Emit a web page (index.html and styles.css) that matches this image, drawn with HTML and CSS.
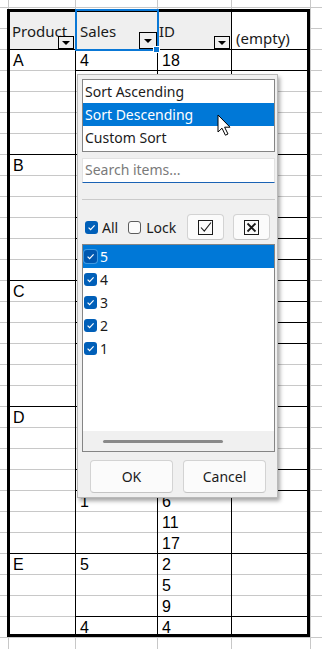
FILE: index.html
```html
<!DOCTYPE html>
<html>
<head>
<meta charset="utf-8">
<title>Pivot table filter</title>
<link rel="stylesheet" href="styles.css">
</head>
<body>
<div class="sheet">
  <div class="pivot">
    <div class="hd hd-prod"><span>Product</span><span class="dd"></span></div>
    <div class="hd hd-sales"><span>Sales</span><span class="dd dd-open"></span><span class="sel"><span class="sel-handle"></span></span></div>
    <div class="hd hd-id"><span>ID</span><span class="dd"></span></div>
    <div class="hd hd-empty"><span>(empty)</span></div>

    <div class="c prod s5">A</div>
    <div class="c sales s1">4</div><div class="c id s1">18</div><div class="c val s1"></div>
    <div class="c sales s4"></div><div class="c id s4"></div><div class="c val s4"></div>

    <div class="c prod s6">B</div>
    <div class="c sales s3"></div><div class="c id s3"></div><div class="c val s3"></div>
    <div class="c sales s1"></div><div class="c id s1"></div><div class="c val s1"></div>
    <div class="c sales s1"></div><div class="c id s1"></div><div class="c val s1"></div>
    <div class="c sales s1"></div><div class="c id s1"></div><div class="c val s1"></div>

    <div class="c prod s6">C</div>
    <div class="c sales s1"></div><div class="c id s1"></div><div class="c val s1"></div>
    <div class="c sales s1"></div><div class="c id s1"></div><div class="c val s1"></div>
    <div class="c sales s1"></div><div class="c id s1"></div><div class="c val s1"></div>
    <div class="c sales s3"></div><div class="c id s3"></div><div class="c val s3"></div>

    <div class="c prod s7">D</div>
    <div class="c sales s3"></div><div class="c id s3"></div><div class="c val s3"></div>
    <div class="c sales s1"></div><div class="c id s1"></div><div class="c val s1"></div>
    <div class="c sales s3">1</div><div class="c id s3"><span>6</span><span>11</span><span>17</span></div><div class="c val s3"></div>

    <div class="c prod s4 end">E</div>
    <div class="c sales s3">5</div><div class="c id s3"><span>2</span><span>5</span><span>9</span></div><div class="c val s3"></div>
    <div class="c sales s1 end">4</div><div class="c id s1 end">4</div><div class="c val s1 end"></div>
  </div>

  <div class="popup">
    <div class="sortlist">
      <div class="sortitem">Sort Ascending</div>
      <div class="sortitem hl">Sort Descending</div>
      <div class="sortitem">Custom Sort</div>
    </div>
    <div class="search">Search items...</div>
    <div class="sep"></div>
    <div class="controls">
      <span class="cb on"><svg viewBox="0 0 13 13" width="13" height="13"><path d="M3.6 6.6 L5.6 8.6 L9.6 4.4" fill="none" stroke="#fff" stroke-width="1.2"/></svg></span>
      <span class="ctl-label">All</span>
      <span class="cb off lock-cb"></span>
      <span class="ctl-label lock-label">Lock</span>
      <span class="ibtn ibtn-first"><svg viewBox="0 0 15 15" width="15" height="15"><rect x="0.5" y="0.5" width="14" height="14" fill="none" stroke="#1a1a1a"/><path d="M3 7.5 L6.3 11.2 L13 2.5" fill="none" stroke="#1a1a1a" stroke-width="1.1"/></svg></span>
      <span class="ibtn ibtn-last"><svg viewBox="0 0 15 15" width="15" height="15"><rect x="0.5" y="0.5" width="14" height="14" fill="none" stroke="#1a1a1a"/><path d="M3.5 3.5 L11.5 11.5 M11.5 3.5 L3.5 11.5" fill="none" stroke="#1a1a1a" stroke-width="1.8"/></svg></span>
    </div>
    <div class="vlist">
      <div class="vitems">
        <div class="vitem hl"><span class="cb on cb-hl"><svg viewBox="0 0 13 13" width="13" height="13"><path d="M3.6 6.6 L5.6 8.6 L9.6 4.4" fill="none" stroke="#fff" stroke-width="1.2"/></svg></span><span class="lbl">5</span></div>
        <div class="vitem"><span class="cb on"><svg viewBox="0 0 13 13" width="13" height="13"><path d="M3.6 6.6 L5.6 8.6 L9.6 4.4" fill="none" stroke="#fff" stroke-width="1.2"/></svg></span><span class="lbl">4</span></div>
        <div class="vitem"><span class="cb on"><svg viewBox="0 0 13 13" width="13" height="13"><path d="M3.6 6.6 L5.6 8.6 L9.6 4.4" fill="none" stroke="#fff" stroke-width="1.2"/></svg></span><span class="lbl">3</span></div>
        <div class="vitem"><span class="cb on"><svg viewBox="0 0 13 13" width="13" height="13"><path d="M3.6 6.6 L5.6 8.6 L9.6 4.4" fill="none" stroke="#fff" stroke-width="1.2"/></svg></span><span class="lbl">2</span></div>
        <div class="vitem"><span class="cb on"><svg viewBox="0 0 13 13" width="13" height="13"><path d="M3.6 6.6 L5.6 8.6 L9.6 4.4" fill="none" stroke="#fff" stroke-width="1.2"/></svg></span><span class="lbl">1</span></div>
      </div>
      <div class="hscroll"><div class="thumb"></div></div>
    </div>
    <div class="actions">
      <span class="btn">OK</span>
      <span class="btn">Cancel</span>
    </div>
  </div>

  <svg class="cursor" viewBox="0 0 16 24" width="16" height="24"><path d="M1 1 L1 18 L5 14.2 L8.4 21.2 L11 20 L7.6 13.2 L13 13.2 Z" fill="#fff" stroke="#000" stroke-width="1" stroke-linejoin="miter"/></svg>
</div>
</body>
</html>
```

FILE: styles.css
```css
* { box-sizing: border-box; }

html, body {
  margin: 0;
  padding: 0;
  background: #fff;
}

body {
  width: 322px;
  height: 649px;
  overflow: hidden;
}

.sheet {
  position: relative;
  width: 322px;
  height: 649px;
  padding: 9px 0 0 7px;
  background-color: #fff;
  background-image:
    linear-gradient(to right, transparent 0 8px, #c8c8c8 8px 9px, transparent 9px 75px, #c8c8c8 75px 76px, transparent 76px 157px, #c8c8c8 157px 158px, transparent 158px 231px, #c8c8c8 231px 232px, transparent 232px 310px, #c8c8c8 310px 311px, transparent 311px),
    repeating-linear-gradient(to bottom, transparent 0 7px, #c8c8c8 7px 8px, transparent 8px 21px);
  font-family: "Liberation Sans", Arial, sans-serif;
  font-size: 16px;
  color: #000;
}

/* ---------- pivot table ---------- */
.pivot {
  width: 303px;
  height: 628px;
  border: 3px solid #000;
  display: grid;
  grid-template-columns: 66px 82px 74px 75px;
  grid-template-rows: 38px repeat(27, 21px) 17px;
}

.hd {
  position: relative;
  display: flex;
  align-items: center;
  padding-left: 2px;
  background: #efefef;
  border-right: 1px solid #000;
  border-bottom: 1px solid #000;
  font-family: "Noto Sans", sans-serif;
  font-size: 15px;
  line-height: 20px;
  white-space: nowrap;
  color: #1a1a1a;
}

.hd-sales { padding-left: 4px; }
.hd-id { padding-left: 1px; }

.hd-empty {
  align-items: flex-end;
  padding-left: 4px;
  padding-bottom: 1px;
  background: #fff;
  border-right: 0;
}

.dd {
  position: absolute;
  right: 1px;
  bottom: 0;
  width: 16px;
  height: 13px;
  border: 1px solid #000;
  background: #efefef;
  display: flex;
  align-items: center;
  justify-content: center;
}

.dd::after {
  content: "";
  border-left: 4px solid transparent;
  border-right: 4px solid transparent;
  border-top: 4px solid #000;
}

.dd-open {
  right: 0;
  width: 18px;
  height: 17px;
}

.sel {
  position: absolute;
  left: -1px;
  top: -3px;
  width: 84px;
  height: 42px;
  border: 2px solid #0a78d6;
  z-index: 3;
}

.sel-handle {
  position: absolute;
  left: 76px;
  top: 35px;
  width: 7px;
  height: 7px;
  background: #0a78d6;
  border: 1px solid #fff;
}

.c {
  border-bottom: 1px solid #000;
  background-image: repeating-linear-gradient(to bottom, transparent 0 20px, #c8c8c8 20px 21px);
  line-height: 21px;
  white-space: nowrap;
}

.c span { display: block; }

.prod { grid-column: 1; border-right: 1px solid #000; padding-left: 3px; }
.sales { grid-column: 2; border-right: 1px solid #000; padding-left: 4px; }
.id { grid-column: 3; border-right: 1px solid #000; padding-left: 4px; }
.val { grid-column: 4; }
.end { border-bottom: 0; }

.s1 { grid-row: span 1; }
.s3 { grid-row: span 3; }
.s4 { grid-row: span 4; }
.s5 { grid-row: span 5; }
.s6 { grid-row: span 6; }
.s7 { grid-row: span 7; }

/* ---------- filter popup ---------- */
.popup {
  position: absolute;
  left: 77px;
  top: 74px;
  width: 201px;
  height: 424px;
  padding: 4px 2px 4px 4px;
  background: #f0f0f0;
  border: 1px solid #b9b9b9;
  box-shadow: 2px 3px 4px rgba(0, 0, 0, 0.35);
  display: flex;
  flex-direction: column;
  font-family: "Noto Sans", sans-serif;
  font-size: 14px;
  color: #1b1b1b;
  z-index: 5;
}

.sortlist {
  height: 73px;
  flex: none;
  background: #fff;
  border: 1px solid #858585;
  padding-bottom: 2px;
}

.sortitem {
  height: 23px;
  line-height: 23px;
  padding-left: 2px;
  white-space: nowrap;
}

.sortitem.hl, .vitem.hl {
  background: #0078d7;
  color: #fff;
}

.search {
  flex: none;
  margin-top: 6px;
  height: 25px;
  background: #fff;
  border: 1px solid #e2e2e2;
  border-bottom: 1px solid #1a62b4;
  padding-left: 2px;
  line-height: 21px;
  color: #7a7a7a;
}

.sep {
  flex: none;
  margin-top: 16px;
  height: 1px;
  background: #cacaca;
}

.controls {
  flex: none;
  margin-top: 14px;
  height: 26px;
  display: flex;
  align-items: center;
  padding-left: 3px;
}

.cb {
  flex: none;
  width: 13px;
  height: 13px;
  border-radius: 3px;
  display: inline-flex;
}

.cb.on { background: #005fb8; }
.cb.cb-hl { background: #0058b0; box-shadow: 0 0 0 1px rgba(255, 255, 255, 0.25); }
.cb.off { background: #fbfbfb; border: 1px solid #5c5c5c; }

.ctl-label { margin-left: 4px; }
.lock-cb { margin-left: 10px; }
.lock-label { margin-left: 5px; }

.ibtn {
  flex: none;
  width: 37px;
  height: 26px;
  border: 1px solid #d3d3d3;
  border-bottom-color: #c4c4c4;
  border-radius: 4px;
  background: #fbfbfb;
  display: flex;
  align-items: center;
  justify-content: center;
}

.ibtn-first { margin-left: auto; }
.ibtn-last { margin-left: 9px; margin-right: 5px; }

.vlist {
  flex: none;
  margin-top: 4px;
  height: 208px;
  background: #fff;
  border: 1px solid #858585;
  display: flex;
  flex-direction: column;
}

.vitems { flex: 1; }

.vitem {
  height: 23px;
  display: flex;
  align-items: center;
  padding-left: 1px;
}

.vitem .lbl { margin-left: 3px; }

.hscroll {
  flex: none;
  height: 20px;
  background: #f0f0f0;
  padding: 9px 0 0 20px;
}

.thumb {
  width: 120px;
  height: 3px;
  border-radius: 2px;
  background: #8a8a8a;
}

.actions {
  flex: none;
  margin-top: 8px;
  height: 33px;
  display: flex;
  gap: 10px;
  padding-left: 8px;
}

.btn {
  width: 83px;
  border: 1px solid #d3d3d3;
  border-bottom-color: #c4c4c4;
  border-radius: 4px;
  background: #fbfbfb;
  display: flex;
  align-items: center;
  justify-content: center;
}

.cursor {
  position: absolute;
  left: 217px;
  top: 114px;
  z-index: 6;
}
```
